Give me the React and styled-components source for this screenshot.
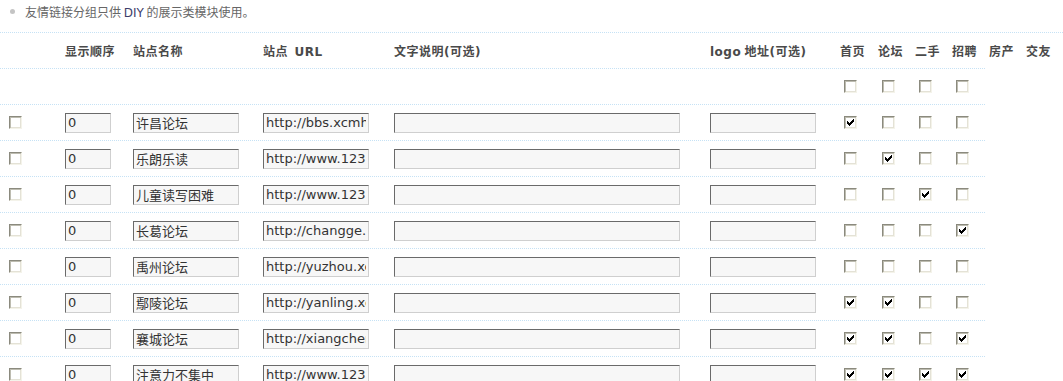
import React from "react";
import styled, { createGlobalStyle } from "styled-components";

const Global = createGlobalStyle`
  html, body { margin: 0; padding: 0; background: #fff; }
  body { font-family: "DejaVu Sans", "Noto Sans CJK SC", sans-serif; font-size: 12px; color: #444; }
`;

const Page = styled.div`
  width: 1063px;
  overflow: hidden;
`;

const Intro = styled.div`
  height: 32px;
  line-height: 24px;
  padding-left: 25px;
  position: relative;
  color: #666;
  font-family: "Noto Sans CJK SC", sans-serif;
  font-size: 12px;
  &::before {
    content: "";
    position: absolute;
    left: 10px;
    top: 9px;
    width: 5px;
    height: 5px;
    border-radius: 50%;
    background: #c4c4c4;
  }
`;

const Latin = styled.span`
  font-family: "DejaVu Sans", sans-serif;
  color: ${(p) => p.$color || "inherit"};
  font-weight: ${(p) => (p.$bold ? 700 : "inherit")};
`;

const headerCols = "65px 68px 130px 131px 316px 130px 38px 37px 37px 37px 37px 37px";
const bodyCols = "65px 68px 130px 131px 316px 130px 38px 37px 37px 33px";

const HeadRow = styled.div`
  display: grid;
  grid-template-columns: ${headerCols};
  height: 36px;
  box-sizing: border-box;
  border-top: 1px dotted #c6e2f5;
  align-items: center;
`;

const HeadCell = styled.div`
  font-family: "Noto Sans CJK SC", sans-serif;
  font-weight: 700;
  font-size: 12px;
  color: #4a4a4a;
  white-space: nowrap;
  letter-spacing: 0.5px;
`;

const Row = styled.div`
  display: grid;
  grid-template-columns: ${bodyCols};
  width: 985px;
  height: 36px;
  box-sizing: border-box;
  border-top: 1px dotted #c6e2f5;
  align-items: center;
`;

const Cell = styled.div`
  display: flex;
  align-items: center;
  padding-left: ${(p) => p.$pad || 0}px;
`;

const Field = styled.input`
  box-sizing: border-box;
  width: ${(p) => p.$w}px;
  height: 20px;
  margin: 0;
  padding: 0 2px;
  border: 1px solid;
  border-color: #6a6a6a #cfcfcf #cfcfcf #6a6a6a;
  background: #f7f7f7;
  color: #333;
  font-family: "DejaVu Sans", "Noto Sans CJK SC", sans-serif;
  font-size: 13px;
  outline: none;
  border-radius: 0;
`;

const Box = styled.span`
  box-sizing: border-box;
  display: inline-block;
  width: 13px;
  height: 13px;
  border: 1px solid;
  border-color: #8b8a7e #f4f3ea #f4f3ea #8b8a7e;
  box-shadow: inset 1px 1px 0 #bdbcb0, inset -1px -1px 0 #e4e2d6;
  background: #fff;
  position: relative;
  svg {
    position: absolute;
    left: 2px;
    top: 2px;
  }
`;

const Check = () => (
  <svg width="7" height="7" viewBox="0 0 7 7" shapeRendering="crispEdges">
    <path
      d="M6 0h1v1H6zM5 1h2v1H5zM0 2h1v1H0zM4 2h3v1H4zM0 3h2v1H0zM3 3h3v1H3zM0 4h5v1H0zM1 5h3v1H1zM2 6h1v1H2z"
      fill="#000"
    />
  </svg>
);

const CheckBox = ({ on }) => <Box>{on ? <Check /> : null}</Box>;

const rows = [
  { name: "许昌论坛", url: "http://bbs.xcmhw.com", c: [1, 0, 0, 0] },
  { name: "乐朗乐读", url: "http://www.123", c: [0, 1, 0, 0] },
  { name: "儿童读写困难", url: "http://www.123", c: [0, 0, 1, 0] },
  { name: "长葛论坛", url: "http://changge.xcmhw.com", c: [0, 0, 0, 1] },
  { name: "禹州论坛", url: "http://yuzhou.xcmhw.com", c: [0, 0, 0, 0] },
  { name: "鄢陵论坛", url: "http://yanling.xcmhw.com", c: [1, 1, 0, 0] },
  { name: "襄城论坛", url: "http://xiangcheng.xcmhw.com", c: [1, 1, 0, 1] },
  { name: "注意力不集中", url: "http://www.123", c: [1, 1, 1, 1] },
];

const heads = ["首页", "论坛", "二手", "招聘", "房产", "交友"];

export default function App() {
  return (
    <Page>
      <Global />
      <Intro>
        友情链接分组只供 <Latin $color="#3c3c6a">DIY</Latin> 的展示类模块使用。
      </Intro>
      <HeadRow>
        <HeadCell />
        <HeadCell>显示顺序</HeadCell>
        <HeadCell>站点名称</HeadCell>
        <HeadCell>
          站点&nbsp; <Latin $bold>URL</Latin>
        </HeadCell>
        <HeadCell>
          文字说明<Latin $bold>(</Latin>可选<Latin $bold>)</Latin>
        </HeadCell>
        <HeadCell>
          <Latin $bold>logo</Latin> 地址<Latin $bold>(</Latin>可选<Latin $bold>)</Latin>
        </HeadCell>
        {heads.map((h) => (
          <HeadCell key={h}>{h}</HeadCell>
        ))}
      </HeadRow>
      <Row>
        <Cell />
        <Cell />
        <Cell />
        <Cell />
        <Cell />
        <Cell />
        {[0, 1, 2, 3].map((i) => (
          <Cell key={i} $pad={4}>
            <CheckBox />
          </Cell>
        ))}
      </Row>
      {rows.map((r, idx) => (
        <Row key={idx}>
          <Cell $pad={9}>
            <CheckBox />
          </Cell>
          <Cell>
            <Field $w={46} readOnly defaultValue="0" />
          </Cell>
          <Cell>
            <Field $w={106} readOnly defaultValue={r.name} />
          </Cell>
          <Cell>
            <Field $w={106} readOnly defaultValue={r.url} />
          </Cell>
          <Cell>
            <Field $w={286} readOnly defaultValue="" />
          </Cell>
          <Cell>
            <Field $w={106} readOnly defaultValue="" />
          </Cell>
          {r.c.map((on, i) => (
            <Cell key={i} $pad={4}>
              <CheckBox on={!!on} />
            </Cell>
          ))}
        </Row>
      ))}
    </Page>
  );
}
